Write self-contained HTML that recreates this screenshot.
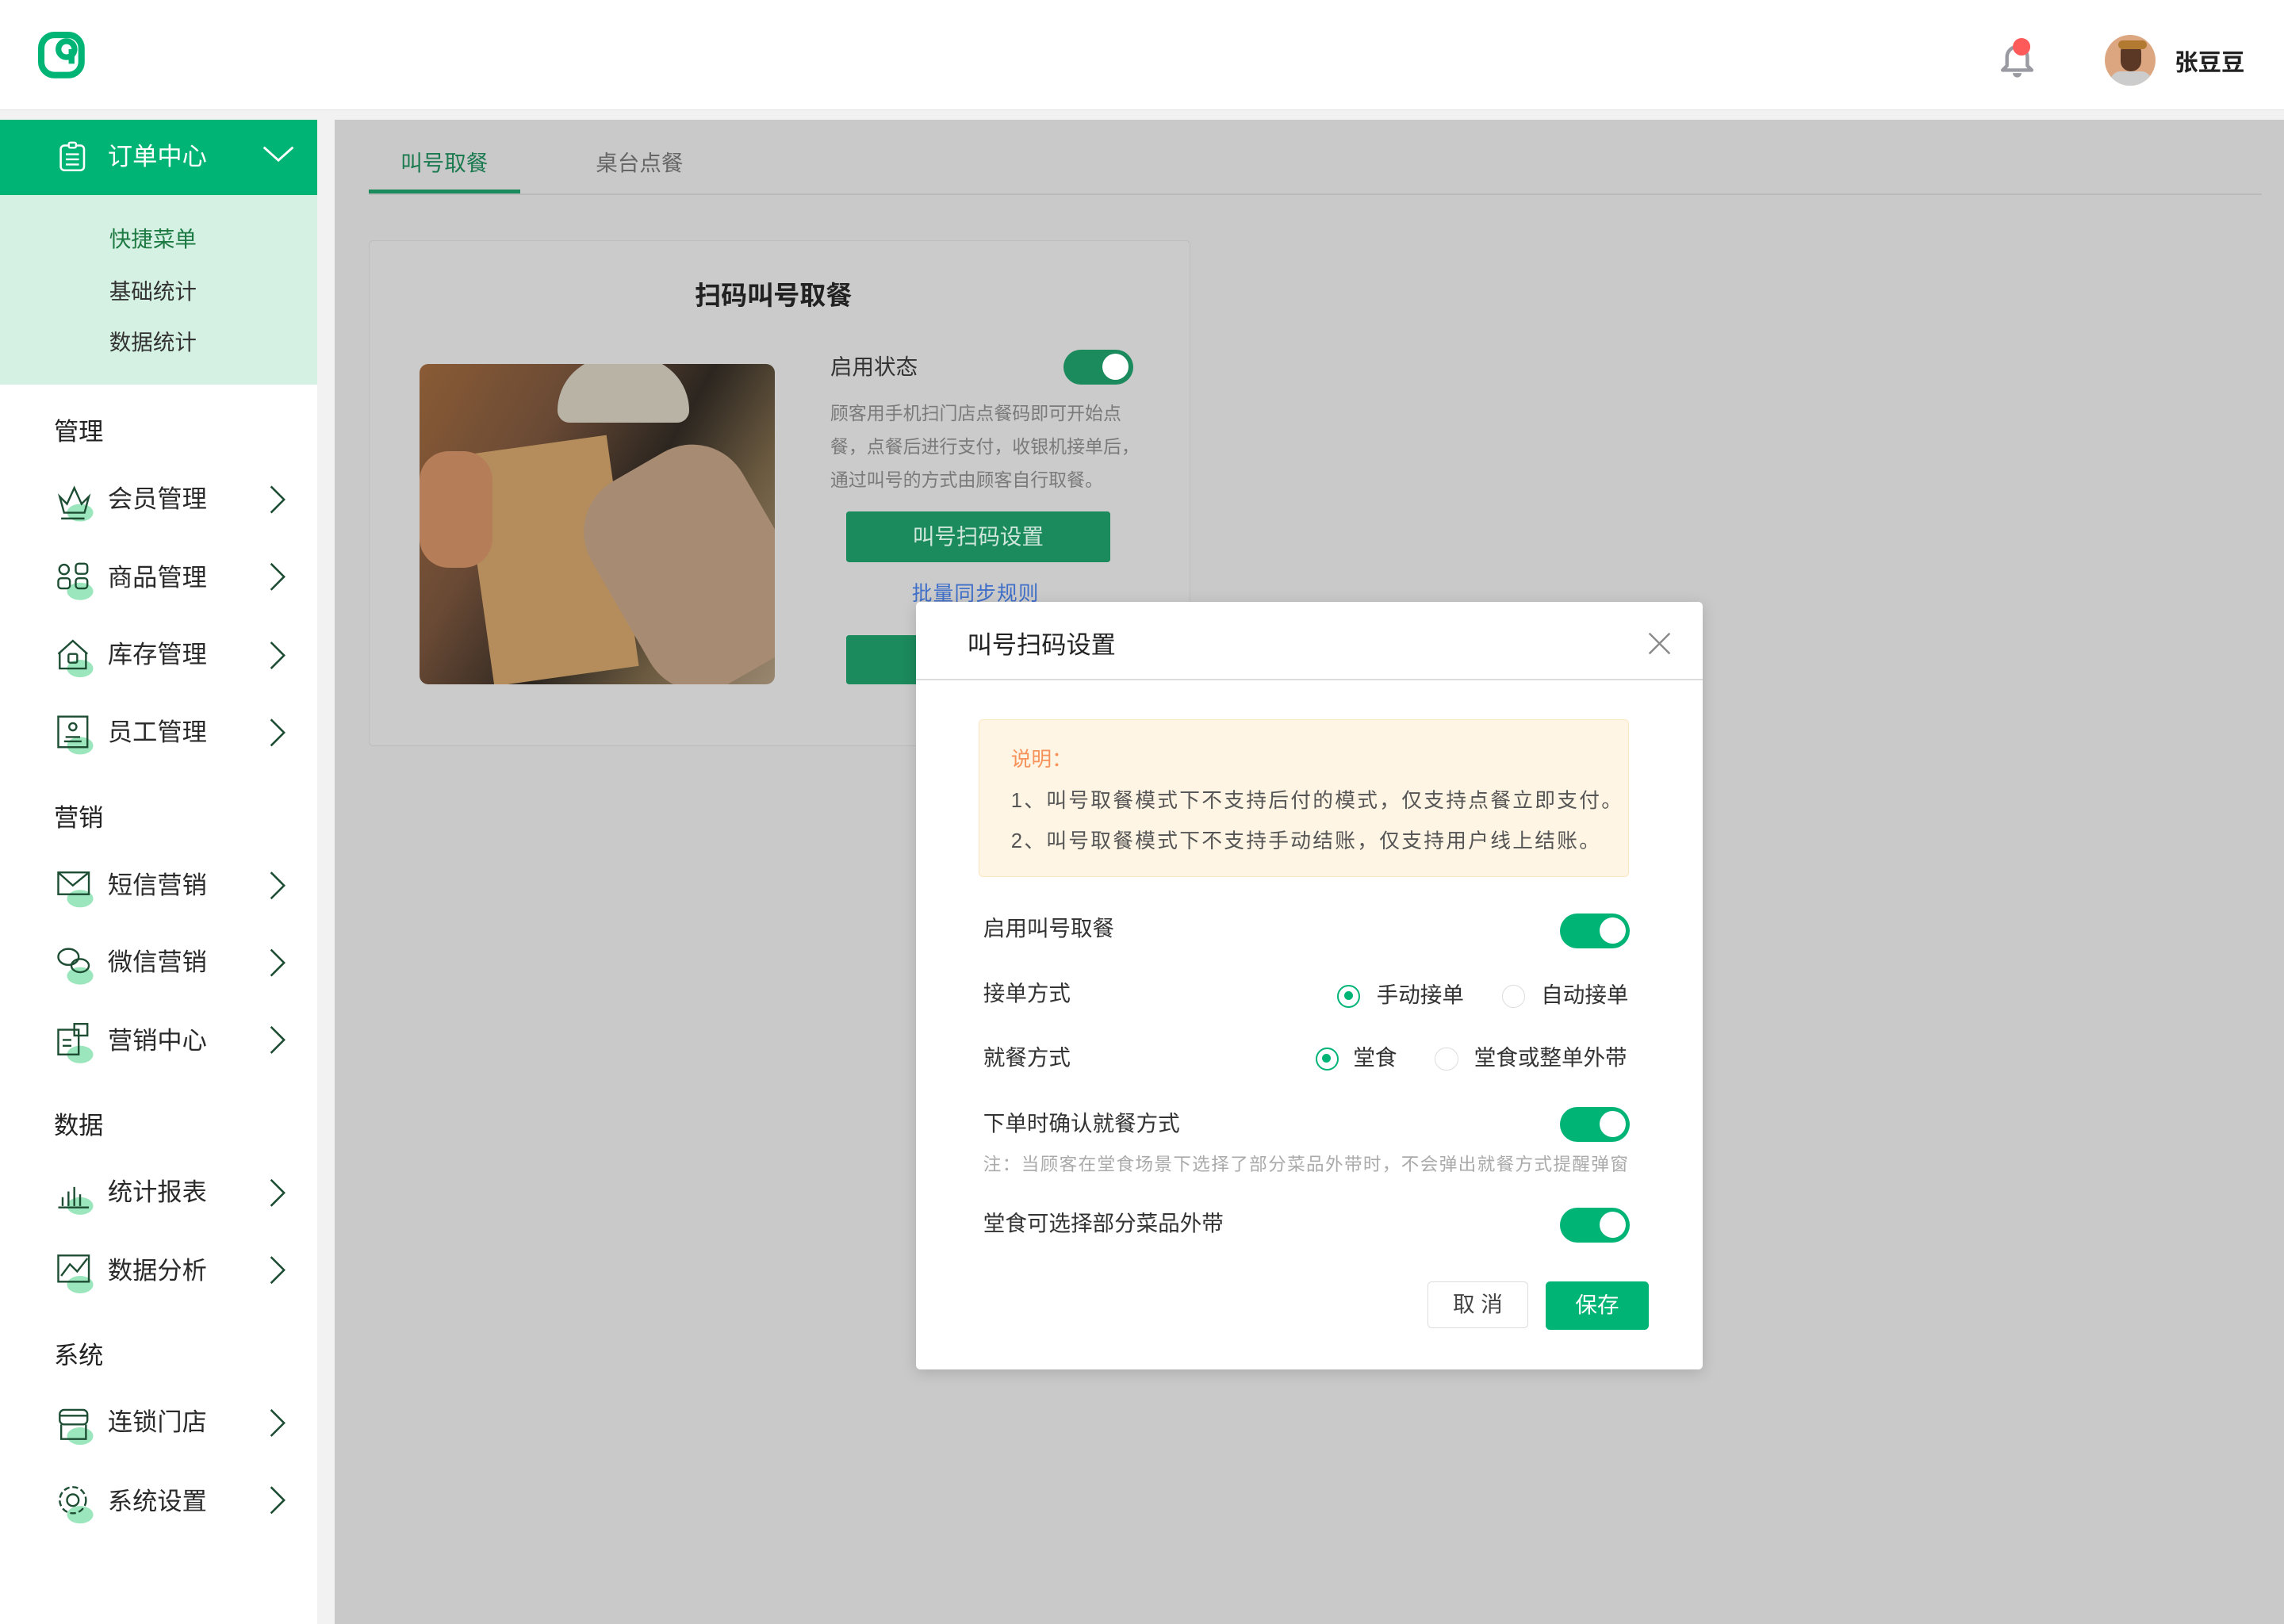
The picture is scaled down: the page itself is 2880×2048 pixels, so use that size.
<!DOCTYPE html>
<html><head><meta charset="utf-8">
<style>
html,body{margin:0;padding:0;}
body{width:1568px;height:1115px;zoom:1.83673;overflow:hidden;position:relative;background:#f2f2f2;font-family:"Liberation Sans","Noto Sans CJK SC",sans-serif;color:#333;line-height:1.4;}
.a{position:absolute;}
.hdr{left:0;top:0;width:1568px;height:75px;background:#fff;border-bottom:1px solid #e2e2e6;}
.side{left:0;top:82px;width:218px;height:1033px;background:#fff;}
.main{left:230px;top:82px;width:1338px;height:1033px;background:#c9c9c9;}
.sec{left:37px;font-size:17px;color:#222;}
.item{left:74px;font-size:17px;color:#2a2a2a;}
.tog{width:48px;height:24px;border-radius:12px;background:#00b476;}
.tog:after{content:"";position:absolute;right:3px;top:3px;width:18px;height:18px;border-radius:50%;background:#fff;}
.lbl{font-size:15px;color:#333;}
.rad{width:16px;height:16px;border-radius:50%;border:1px solid #ddd;box-sizing:border-box;background:#fff;}
.rad.on{border:1.5px solid #00b476;}
.rad.on:after{content:"";position:absolute;left:3.5px;top:3.5px;width:6px;height:6px;border-radius:50%;background:#00b476;}
</style></head><body>
<div class="a hdr"></div>
<svg class="a" style="left:26px;top:22px" width="32" height="32" viewBox="0 0 32 32"><rect x="2.2" y="2.2" width="27.6" height="27.6" rx="9" fill="none" stroke="#00b476" stroke-width="4.4"/><circle cx="19.5" cy="12" r="5.5" fill="#fff" stroke="#00b476" stroke-width="4"/><path d="M23 12 V22" stroke="#00b476" stroke-width="4"/></svg>
<svg class="a" style="left:1370px;top:26px" width="30" height="30" viewBox="0 0 30 30"><path d="M5 22 L8 19 V13 a7 7 0 0 1 14 0 V19 L25 22 Z" fill="none" stroke="#999aa2" stroke-width="2.4" stroke-linejoin="round"/><path d="M12 24 a3 3 0 0 0 6 0" fill="#999aa2"/><circle cx="18" cy="6" r="6" fill="#fe5a5a"/></svg>
<div class="a" style="left:1445px;top:24px;width:35px;height:35px;border-radius:50%;background:#dca681;overflow:hidden"><div class="a" style="left:11px;top:5px;width:14px;height:20px;border-radius:7px;background:#5b3826"></div><div class="a" style="left:9px;top:4px;width:20px;height:6px;border-radius:4px;background:#b27a30"></div><div class="a" style="left:4px;top:25px;width:28px;height:14px;border-radius:8px;background:#ccc"></div></div>
<div class="a" style="left:1493px;top:32px;font-size:16px;font-weight:bold;color:#222">张豆豆</div>

<div class="a side"></div>
<div class="a" style="left:0;top:82px;width:218px;height:52px;background:#00b476"></div>
<svg class="a" style="left:39px;top:97px" width="22" height="22" viewBox="0 0 22 22"><rect x="2.5" y="3" width="16" height="17" rx="2.5" fill="none" stroke="#fff" stroke-width="1.4"/><rect x="8" y="1" width="5" height="3.5" rx="1" fill="#00b476" stroke="#fff" stroke-width="1.3"/><path d="M6 9h9M6 12.5h9M6 16h9" stroke="#fff" stroke-width="1.3"/></svg>
<div class="a" style="left:74px;top:96px;font-size:17px;color:#fff">订单中心</div>
<svg class="a" style="left:179px;top:99px" width="24" height="14" viewBox="0 0 24 14"><path d="M2 2 L12 11 L22 2" fill="none" stroke="#fff" stroke-width="1.6"/></svg>
<div class="a" style="left:0;top:134px;width:218px;height:130px;background:#d5f1e3"></div>
<div class="a" style="left:75px;top:154px;font-size:15px;color:#1e7a43">快捷菜单</div>
<div class="a" style="left:75px;top:190px;font-size:15px;color:#333">基础统计</div>
<div class="a" style="left:75px;top:225px;font-size:15px;color:#333">数据统计</div>

<div class="a sec" style="top:285px">管理</div>
<div class="a sec" style="top:550px">营销</div>
<div class="a sec" style="top:761px">数据</div>
<div class="a sec" style="top:919px">系统</div>

<div class="a item" style="top:331px">会员管理</div>
<div class="a item" style="top:385px">商品管理</div>
<div class="a item" style="top:438px">库存管理</div>
<div class="a item" style="top:491px">员工管理</div>
<div class="a item" style="top:596px">短信营销</div>
<div class="a item" style="top:649px">微信营销</div>
<div class="a item" style="top:703px">营销中心</div>
<div class="a item" style="top:807px">统计报表</div>
<div class="a item" style="top:861px">数据分析</div>
<div class="a item" style="top:965px">连锁门店</div>
<div class="a item" style="top:1019px">系统设置</div>

<svg class="a" style="left:0;top:0" width="218" height="1115">
<defs><g id="c"><path d="M0 0 L9 9 L0 18" fill="none" stroke="#1d4d33" stroke-width="1.4"/></g></defs>
<g fill="#9be6bc"><ellipse cx="55" cy="352" rx="9" ry="6"/><ellipse cx="55" cy="406" rx="9" ry="6"/><ellipse cx="55" cy="459" rx="9" ry="6"/><ellipse cx="55" cy="512" rx="9" ry="6"/><ellipse cx="55" cy="617" rx="9" ry="6"/><ellipse cx="55" cy="670" rx="9" ry="6"/><ellipse cx="55" cy="724" rx="9" ry="6"/><ellipse cx="55" cy="828" rx="9" ry="6"/><ellipse cx="55" cy="882" rx="9" ry="6"/><ellipse cx="55" cy="986" rx="9" ry="6"/><ellipse cx="55" cy="1040" rx="9" ry="6"/></g>
<g fill="none" stroke="#1d4d33" stroke-width="1.3">
<path d="M41 341 L44 352 L58 352 L61 341 L56 346 L51 335 L46 346 Z"/><path d="M42 356h16"/>
<circle cx="44" cy="391" r="3.3"/><rect x="52" y="387" width="8" height="7" rx="2"/><rect x="40" y="397" width="8" height="7" rx="2"/><rect x="52" y="397" width="8" height="7" rx="2"/>
<path d="M40 449 L50 440 L60 449 M41 448 V459 H59 V448"/><rect x="47" y="449" width="6" height="6" rx="1"/>
<rect x="40" y="492" width="20" height="21"/><circle cx="50" cy="499" r="2.5"/><path d="M45 506 h10 M44 509 h12"/>
<rect x="40" y="599" width="21" height="15"/><path d="M40 599 L50 608 L61 599"/>
<ellipse cx="47" cy="657" rx="7" ry="5.5"/><ellipse cx="55" cy="663" rx="6" ry="4.5"/>
<rect x="40" y="707" width="14" height="17"/><rect x="51" y="703" width="9" height="8"/><path d="M43 714h6 M43 718h6"/>
<path d="M40 829 h21 M43 828 v-6 M47 828 v-10 M51 828 v-13 M55 828 v-8"/>
<rect x="40" y="862" width="21" height="18"/><path d="M42 876 L48 868 L53 873 L60 864"/>
<rect x="41" y="968" width="19" height="10" rx="3"/><path d="M42 978 V988 H59 V978 M41 972 h19"/>
<circle cx="50" cy="1030" r="4"/><circle cx="50" cy="1030" r="9" stroke-dasharray="4 2"/>
</g>
<g transform="translate(186 334)"><use href="#c"/></g>
<g transform="translate(186 387)"><use href="#c"/></g>
<g transform="translate(186 441)"><use href="#c"/></g>
<g transform="translate(186 494)"><use href="#c"/></g>
<g transform="translate(186 599)"><use href="#c"/></g>
<g transform="translate(186 652)"><use href="#c"/></g>
<g transform="translate(186 705)"><use href="#c"/></g>
<g transform="translate(186 810)"><use href="#c"/></g>
<g transform="translate(186 863)"><use href="#c"/></g>
<g transform="translate(186 968)"><use href="#c"/></g>
<g transform="translate(186 1021)"><use href="#c"/></g>
</svg>

<div class="a main"></div>
<div class="a" style="left:253px;top:133px;width:1300px;height:1px;background:#bababa"></div>
<div class="a" style="left:253px;top:130px;width:104px;height:3px;background:#1b8a5c"></div>
<div class="a" style="left:275px;top:102px;font-size:15px;color:#1b7a50">叫号取餐</div>
<div class="a" style="left:409px;top:102px;font-size:15px;color:#666">桌台点餐</div>

<div class="a" style="left:253px;top:165px;width:563px;height:346px;background:#cbcbcb;border:1px solid #bdbdbd;border-radius:3px"></div>
<div class="a" style="left:477px;top:191px;font-size:18px;font-weight:bold;color:#222">扫码叫号取餐</div>
<div class="a" style="left:288px;top:250px;width:244px;height:220px;border-radius:6px;overflow:hidden;background:linear-gradient(120deg,#8a5b35 0%,#6a4a35 30%,#2c2620 55%,#6b5a40 75%,#9a8770 100%)">
<div class="a" style="left:40px;top:55px;width:100px;height:160px;background:#b58d5c;transform:rotate(-8deg)"></div>
<div class="a" style="left:95px;top:-5px;width:90px;height:45px;border-radius:45px 45px 10px 10px;background:#b9b3a6"></div>
<div class="a" style="left:0;top:60px;width:50px;height:80px;background:#b57d58;border-radius:20px"></div>
<div class="a" style="left:130px;top:60px;width:120px;height:160px;background:#a88b73;border-radius:40px;transform:rotate(-30deg)"></div>
</div>
<div class="a" style="left:570px;top:242px;font-size:15px;color:#333">启用状态</div>
<div class="a tog" style="left:730px;top:240px;background:#1b8a5c"></div>
<div class="a" style="left:570px;top:272px;width:222px;font-size:12.5px;line-height:23px;color:#7a7a7a">顾客用手机扫门店点餐码即可开始点餐，点餐后进行支付，收银机接单后，通过叫号的方式由顾客自行取餐。</div>
<div class="a" style="left:581px;top:351px;width:181px;height:35px;background:#1b8a5c;border-radius:2px;color:#cfe6da;font-size:15px;text-align:center;line-height:35px">叫号扫码设置</div>
<div class="a" style="left:626px;top:398px;font-size:14px;color:#3f6fc9;letter-spacing:0.6px">批量同步规则</div>
<div class="a" style="left:581px;top:436px;width:60px;height:34px;background:#1b8a5c;border-radius:2px"></div>

<div class="a" style="left:629px;top:413px;width:540px;height:527px;background:#fff;border-radius:3px;box-shadow:0 2px 10px rgba(0,0,0,.15)"></div>
<div class="a" style="left:664px;top:431px;font-size:17px;color:#222">叫号扫码设置</div>
<svg class="a" style="left:1130px;top:433px" width="18" height="18" viewBox="0 0 18 18"><path d="M2 2L16 16M16 2L2 16" stroke="#888" stroke-width="1.3"/></svg>
<div class="a" style="left:629px;top:466px;width:540px;height:1px;background:#ddd"></div>
<div class="a" style="left:672px;top:494px;width:445px;height:107px;background:#fef5e4;border:1px solid #fce7c3;border-radius:3px"></div>
<div class="a" style="left:694px;top:512px;font-size:14px;color:#f7925a">说明：</div>
<div class="a" style="left:694px;top:540px;font-size:14px;color:#555;white-space:nowrap;letter-spacing:1.25px">1、叫号取餐模式下不支持后付的模式，仅支持点餐立即支付。</div>
<div class="a" style="left:694px;top:568px;font-size:14px;color:#555;white-space:nowrap;letter-spacing:1.25px">2、叫号取餐模式下不支持手动结账，仅支持用户线上结账。</div>

<div class="a lbl" style="left:675px;top:627px">启用叫号取餐</div>
<div class="a tog" style="left:1071px;top:627px"></div>
<div class="a lbl" style="left:675px;top:672px">接单方式</div>
<div class="a rad on" style="left:918px;top:676px"></div>
<div class="a lbl" style="left:945px;top:673px">手动接单</div>
<div class="a rad" style="left:1031px;top:676px"></div>
<div class="a lbl" style="left:1058px;top:673px">自动接单</div>
<div class="a lbl" style="left:675px;top:716px">就餐方式</div>
<div class="a rad on" style="left:903px;top:719px"></div>
<div class="a lbl" style="left:929px;top:716px">堂食</div>
<div class="a rad" style="left:985px;top:719px"></div>
<div class="a lbl" style="left:1012px;top:716px">堂食或整单外带</div>
<div class="a lbl" style="left:675px;top:761px">下单时确认就餐方式</div>
<div class="a tog" style="left:1071px;top:760px"></div>
<div class="a" style="left:675px;top:791px;font-size:12.3px;color:#aaa;white-space:nowrap;letter-spacing:0.75px">注：当顾客在堂食场景下选择了部分菜品外带时，不会弹出就餐方式提醒弹窗</div>
<div class="a lbl" style="left:675px;top:830px">堂食可选择部分菜品外带</div>
<div class="a tog" style="left:1071px;top:829px"></div>
<div class="a" style="left:980px;top:880px;width:68px;height:31px;border:1px solid #ddd;border-radius:3px;font-size:15px;color:#444;text-align:center;line-height:31px">取 消</div>
<div class="a" style="left:1061px;top:880px;width:71px;height:33px;background:#00b476;border-radius:3px;font-size:15px;color:#fff;text-align:center;line-height:33px">保存</div>
</body></html>
